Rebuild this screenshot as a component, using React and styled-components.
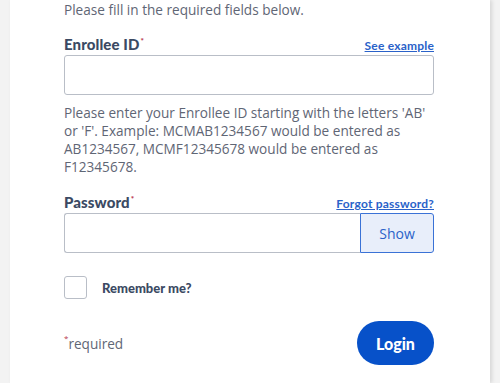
import React, { useState } from 'react'
import styled, { createGlobalStyle } from 'styled-components'

const GlobalStyle = createGlobalStyle`
    html, body {
        margin: 0;
        padding: 0;
        background: #f3f3f3;
        font-family: "Open Sans", "Liberation Sans", sans-serif;
    }
`

const Login = () => {
    const [showPassword, setShowPassword] = useState(false)
    const [remember, setRemember] = useState(false)

    return (
        <>
            <GlobalStyle />
            <Page>
                <Card>
                    <Intro>Please fill in the required fields below.</Intro>

                    <LabelRow>
                        <Label>Enrollee ID<Star>*</Star></Label>
                        <HelpLink href="#">See example</HelpLink>
                    </LabelRow>
                    <Input type="text" />
                    <Hint>
                        Please enter your Enrollee ID starting with the letters 'AB' or 'F'.
                        Example: MCMAB1234567 would be entered as AB1234567, MCMF12345678
                        would be entered as F12345678.
                    </Hint>

                    <LabelRow $top="16px">
                        <Label>Password<Star>*</Star></Label>
                        <HelpLink href="#">Forgot password?</HelpLink>
                    </LabelRow>
                    <PasswordGroup>
                        <Input type={showPassword ? 'text' : 'password'} $joined />
                        <ShowButton type="button" onClick={() => setShowPassword(!showPassword)}>
                            Show
                        </ShowButton>
                    </PasswordGroup>

                    <CheckRow>
                        <CheckBox
                            type="checkbox"
                            checked={remember}
                            onChange={(e) => setRemember(e.target.checked)}
                        />
                        <CheckLabel>Remember me?</CheckLabel>
                    </CheckRow>

                    <Footer>
                        <Required><Star>*</Star>required</Required>
                        <LoginButton type="submit">Login</LoginButton>
                    </Footer>
                </Card>
            </Page>
        </>
    )
}

const Page = styled.div`
    padding: 0 10px 0 10px;
    min-height: 383px;
    box-sizing: border-box;
`

const Card = styled.div`
    background: #fff;
    min-height: 383px;
    box-sizing: border-box;
    padding: 1px 56px 0 54px;
    box-shadow: 2px 0 4px rgba(0, 0, 0, 0.12);
    display: flex;
    flex-direction: column;
`

const Intro = styled.p`
    margin: 0;
    font-size: 13.6px;
    line-height: 18px;
    color: #5f6675;
`

const LabelRow = styled.div`
    display: flex;
    justify-content: space-between;
    align-items: baseline;
    margin-top: ${(p) => p.$top || '15px'};
    margin-bottom: 1px;
    height: 20px;
`

const Label = styled.label`
    font-family: "Lato", "Open Sans", sans-serif;
    font-weight: 900;
    font-size: 15px;
    line-height: 20px;
    color: #3b4a63;
    letter-spacing: 0.1px;
`

const Star = styled.sup`
    color: #b8364a;
    font-size: 8px;
    vertical-align: top;
    position: relative;
    top: -3px;
    margin-left: 1px;
`

const HelpLink = styled.a`
    font-family: "Lato", "Open Sans", sans-serif;
    font-weight: 700;
    font-size: 12px;
    color: #2a62c9;
    text-decoration: underline;
    letter-spacing: 0.2px;
`

const Input = styled.input`
    box-sizing: border-box;
    width: 100%;
    height: 40px;
    border: 1px solid #b9bec7;
    border-radius: ${(p) => (p.$joined ? '3px 0 0 3px' : '3px')};
    border-right: ${(p) => (p.$joined ? 'none' : '1px solid #b9bec7')};
    padding: 0 10px;
    font-size: 14px;
    outline: none;
    background: #fff;
`

const Hint = styled.p`
    margin: 9px 0 0;
    font-size: 13.6px;
    line-height: 18px;
    color: #5f6675;
`

const PasswordGroup = styled.div`
    display: flex;
`

const ShowButton = styled.button`
    flex: 0 0 74px;
    height: 40px;
    box-sizing: border-box;
    border: 1px solid #3a72d6;
    border-radius: 0 3px 3px 0;
    background: #e8eefa;
    color: #2a62c9;
    font-family: "Open Sans", sans-serif;
    font-size: 14px;
    cursor: pointer;
`

const CheckRow = styled.div`
    display: flex;
    align-items: center;
    margin-top: 23px;
    gap: 15px;
`

const CheckBox = styled.input`
    appearance: none;
    margin: 0;
    width: 23px;
    height: 23px;
    border: 1px solid #b9bec7;
    border-radius: 3px;
    background: #fff;
    box-sizing: border-box;
`

const CheckLabel = styled.span`
    font-family: "Lato", "Open Sans", sans-serif;
    font-weight: 900;
    font-size: 13px;
    color: #3b4a63;
`

const Footer = styled.div`
    display: flex;
    justify-content: space-between;
    align-items: center;
    margin-top: 22px;
`

const Required = styled.span`
    font-size: 13.6px;
    color: #5f6675;

    sup {
        top: -2px;
        margin-left: 0;
    }
`

const LoginButton = styled.button`
    width: 77px;
    height: 44px;
    border: none;
    border-radius: 22px;
    background: #0751c9;
    color: #fff;
    font-family: "Lato", "Open Sans", sans-serif;
    font-weight: 900;
    font-size: 16px;
    cursor: pointer;
`

export default Login
